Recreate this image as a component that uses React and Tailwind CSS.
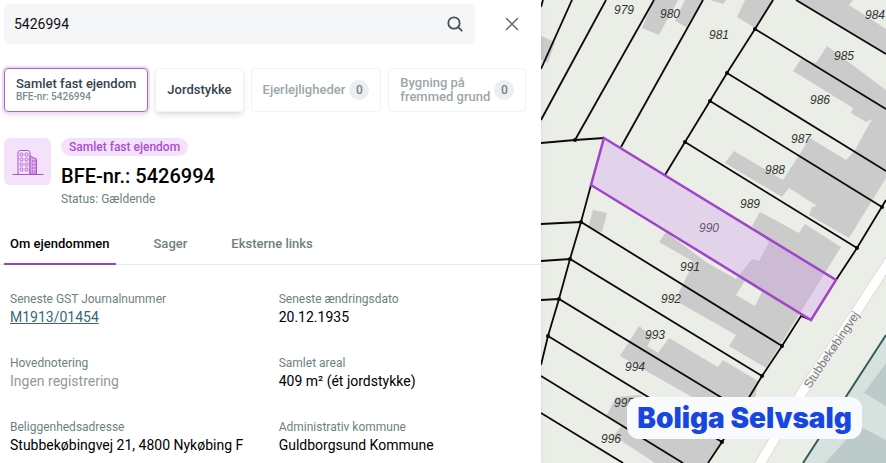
import React, { useState } from "react";

const kinds = [
  { id: "sfe", title: "Samlet fast ejendom", sub: "BFE-nr: 5426994" },
  { id: "jord", title: "Jordstykke" },
  { id: "lejl", title: "Ejerlejligheder", count: 0 },
  { id: "byg", title: "Bygning på fremmed grund", count: 0 },
];

const tabs = ["Om ejendommen", "Sager", "Eksterne links"];

const fields = [
  { label: "Seneste GST Journalnummer", value: "M1913/01454", href: "#journal" },
  { label: "Seneste ændringsdato", value: "20.12.1935" },
  { label: "Hovednotering", value: "Ingen registrering", empty: true },
  { label: "Samlet areal", value: "409 m² (ét jordstykke)" },
  { label: "Beliggenhedsadresse", value: "Stubbekøbingvej 21, 4800 Nykøbing F" },
  { label: "Administrativ kommune", value: "Guldborgsund Kommune" },
];

// Map geometry
const buildings = [
  "541,36 555,42 548,63 541,60",
  "654,0 642,28 659,35 678,0",
  "685,0 675,21 686,27 703,0",
  "710,0 723,4 726,0",
  "745,0 737,17 755,28 775,0",
  "796,0 886,54 886,29 849,5 853,0",
  "827,46 816,63 801,59 793,71 853,108 851,113 866,122 872,119 855,150 850,156 846,160 810,138 783,180 734,151 725,163 782,197 789,188 817,206 812,207 809,215 849,238 886,178 886,90",
  "760,212 752,226 769,242 759,261 752,259 736,279 706,262 666,232 659,242 694,262 679,292 678,302 736,335 729,346 766,368 841,247 805,224 799,233",
  "593,210 607,213 602,232 588,228",
  "639,326 620,356 750,430 758,381 723,360 718,367 669,338 658,353 647,346 653,337",
  "616,397 606,417 622,425 614,436 655,463 707,463 722,441 640,395",
];

const parcelLines = [
  "543,0 541,7",
  "572,0 541,69",
  "606,0 541,120",
  "654,0 575,140",
  "703,0 621,147",
  "541,143 575,140 604,138",
  "773,0 755,29 727,73 710,101 685,142 665,175",
  "796,0 886,54",
  "755,29 886,109",
  "727,73 886,171",
  "710,101 882,207",
  "685,142 857,248",
  "886,200 857,248 836,280",
  "811,320 801,316 782,346 762,376 722,442 708,463",
  "591,185 581,222 570,259 559,299 548,336 541,365",
  "541,224 581,222 782,346",
  "541,261 570,259 762,376",
  "541,300 559,299 742,410",
  "548,336 722,442",
  "541,376 683,463",
  "541,413 623,463",
];

const corners = [
  [575, 140], [755, 29], [727, 73], [710, 101], [685, 142], [882, 207], [857, 248],
  [581, 222], [570, 259], [559, 299], [548, 336], [782, 346], [762, 376], [722, 442],
];

const labels = [
  ["979", 624, 14], ["980", 670, 18], ["981", 719, 39], ["984", 875, 19],
  ["985", 844, 60], ["986", 820, 104], ["987", 801, 143], ["988", 775, 174],
  ["989", 750, 208], ["990", 709, 232], ["991", 690, 271], ["992", 671, 303],
  ["993", 655, 339], ["994", 635, 371], ["995", 624, 407], ["996", 611, 443],
];

function SearchIcon() {
  return (
    <svg width="16" height="16" viewBox="0 0 16 16" fill="none" stroke="#44545a" strokeWidth="1.800">
      <circle cx="7" cy="7" r="5.700" />
      <path d="M11 11l3.700 3.700" strokeLinecap="round" />
    </svg>
  );
}

function CloseIcon() {
  return (
    <svg width="14" height="14" viewBox="0 0 14 14" fill="none" stroke="#5d6b70" strokeWidth="1.500">
      <path d="M1.500 1.500l11 11M12.500 1.500l-11 11" strokeLinecap="round" />
    </svg>
  );
}

function BuildingIcon() {
  return (
    <svg width="32" height="28" viewBox="0 0 32 28" fill="none" stroke="#a855c9" strokeWidth="1">
      <path d="M1 26.500h30" strokeLinecap="round" />
      <path d="M6 26V4l1.500-1.500h9L18 4v22" />
      <path d="M18 8l6.500 3v15H18z" fill="#d9a8ec" />
      {[5, 10, 15, 20].map((y) => (
        <g key={y} strokeWidth=".8">
          <rect x="8" y={y} width="3" height="3" rx="1" />
          <rect x="13" y={y} width="3" height="3" rx="1" />
        </g>
      ))}
      <path d="M20 13h1M22.500 13h1M20 16.500h1M22.500 16.500h1M20 20h1M22.500 20h1M20 23.500h1M22.500 23.500h1" strokeWidth="1.600" />
    </svg>
  );
}

function CadastralMap() {
  return (
    <svg
      className="block h-full w-full"
      viewBox="541 0 345 463"
      preserveAspectRatio="xMinYMin slice"
      role="img"
      aria-label="Matrikelkort"
    >
      <rect x="541" width="345" height="463" fill="#ebeee7" />
      <g fill="#cbcbcb">
        {buildings.map((p) => (
          <polygon key={p} points={p} />
        ))}
      </g>
      <polygon points="736,295 755,306 762,292 745,281" fill="#ebeee7" />

      <polygon points="886,335 803,463 886,463" fill="#d5e2de" />
      <polygon points="886,363 864,393 886,406" fill="#bccac9" />
      <polygon points="859,426 825,463 886,463 886,440" fill="#bccac9" />
      <path d="M886 335L803 463" stroke="#355a5c" strokeWidth="2" />

      <path d="M890 260L858 309L803 391L758 467" fill="none" stroke="#dcdcdc" strokeWidth="11" />
      <path d="M890 260L858 309L803 391L758 467" fill="none" stroke="#fff" strokeWidth="9" />

      <g fill="none" stroke="#0a0a0a" strokeWidth="1.800">
        {parcelLines.map((p) => (
          <polyline key={p} points={p} />
        ))}
      </g>
      {corners.map(([x, y]) => (
        <circle key={`${x}-${y}`} cx={x} cy={y} r="2" fill="#0a0a0a" />
      ))}

      <g
        className="font-['Liberation_Sans',sans-serif] text-[12px] italic"
        textAnchor="middle"
        fill="#333"
      >
        {labels.map(([no, x, y]) => (
          <text key={no} x={x} y={y}>
            {no}
          </text>
        ))}
      </g>
      <text
        className="font-['Liberation_Sans',sans-serif] text-[12px]"
        transform="translate(835 352) rotate(-56)"
        textAnchor="middle"
        fill="#777"
        stroke="#f4f4f4"
        strokeWidth="2"
        paintOrder="stroke"
      >
        Stubbekøbingvej
      </text>

      <polygon
        points="604,138 836,280 811,320 591,185"
        fill="#d39bf0"
        fillOpacity=".32"
        stroke="#a044c8"
        strokeWidth="2.500"
      />
    </svg>
  );
}

export default function App() {
  const [query, setQuery] = useState("5426994");
  const [kind, setKind] = useState("sfe");
  const [tab, setTab] = useState(tabs[0]);

  return (
    <div className="flex min-h-screen bg-white font-[Roboto,sans-serif]">
      {/* Property panel */}
      <main className="z-10 w-[61.1%] shrink-0 bg-white pt-1 shadow-md">
        <form className="flex items-center pl-1" onSubmit={(e) => e.preventDefault()}>
          <div className="flex h-10 flex-1 items-center rounded-md bg-[#f4f6f8] pr-3 pl-1.5">
            <input
              className="min-w-0 flex-1 bg-transparent px-1 text-sm text-[#111] outline-none"
              aria-label="Søg"
              value={query}
              onChange={(e) => setQuery(e.target.value)}
            />
            <button type="submit" aria-label="Søg">
              <SearchIcon />
            </button>
          </div>
          <button
            type="button"
            aria-label="Luk"
            className="mr-4 ml-6 p-1.5"
            onClick={() => setQuery("")}
          >
            <CloseIcon />
          </button>
        </form>

        {/* Property kinds */}
        <div className="mt-6 flex gap-[7px] pr-3 pl-1">
          {kinds.map((k) => (
            <button
              key={k.id}
              type="button"
              disabled={k.count === 0}
              onClick={() => setKind(k.id)}
              className={`flex h-11 shrink-0 items-center gap-1 rounded border px-[11px] text-left text-[13px] leading-[14px] font-medium ${
                k.count === 0
                  ? "border-[#f0f2f3] text-[#9ba7aa]"
                  : kind === k.id
                    ? "border-[#a865cc] text-[#36424f] shadow-md ring-2 ring-[#f0dcf9]"
                    : "border-[#f0f2f3] text-[#36424f] shadow-md"
              }`}
            >
              <span className={k.id === "byg" ? "w-[90px]" : "whitespace-nowrap"}>
                {k.title}
                {k.sub && (
                  <span className="block text-[10px] leading-3 text-[#7b8a8c]">{k.sub}</span>
                )}
              </span>
              {k.count !== undefined && (
                <span className="flex size-5 items-center justify-center rounded-full bg-[#eceff1] text-xs text-[#74838a]">
                  {k.count}
                </span>
              )}
            </button>
          ))}
        </div>

        {/* Heading */}
        <header className="mt-[26px] flex gap-2.5 pl-1">
          <div className="flex size-[47px] items-center justify-center rounded-md bg-[#f3e2fa]">
            <BuildingIcon />
          </div>
          <div>
            <span className="block w-fit rounded-full bg-[#f3e2fa] px-2 text-xs leading-[18px] font-medium text-[#a94fd0]">
              Samlet fast ejendom
            </span>
            <h1 className="mt-1.5 text-xl leading-7 font-medium text-black">BFE-nr.: 5426994</h1>
            <p className="mt-px text-xs text-[#6f7f80]">Status: Gældende</p>
          </div>
        </header>

        <nav className="mt-[22px] flex gap-8 border-b border-[#e6e9eb] pl-1">
          {tabs.map((t) => (
            <button
              key={t}
              type="button"
              onClick={() => setTab(t)}
              className={`-mb-px h-9 border-b-2 px-1.5 pb-1 text-[13px] font-medium ${
                tab === t ? "border-[#9b45bd] text-black" : "border-transparent text-[#6f7f80]"
              }`}
            >
              {t}
            </button>
          ))}
        </nav>

        <dl className="grid grid-cols-2 gap-x-1.5 gap-y-7 pt-[26px] pl-2.5">
          {fields.map((f) => (
            <div key={f.label}>
              <dt className="text-xs leading-4 text-[#6f7f80]">{f.label}</dt>
              <dd className={`text-sm leading-5 ${f.empty ? "text-[#8f9b9e]" : "text-black"}`}>
                {f.href ? (
                  <a href={f.href} className="text-[#356a73] underline">
                    {f.value}
                  </a>
                ) : (
                  f.value
                )}
              </dd>
            </div>
          ))}
        </dl>
      </main>

      {/* Map */}
      <section className="relative min-w-0 flex-1">
        <div className="absolute inset-0">
          <CadastralMap />
        </div>
        <div className="absolute right-6 bottom-6 rounded-xl bg-[#f8fafd] px-2.5 font-[Inter,sans-serif] text-[28px] leading-[42px] font-black whitespace-nowrap text-[#1746e0]">
          Boliga Selvsalg
        </div>
      </section>
    </div>
  );
}
